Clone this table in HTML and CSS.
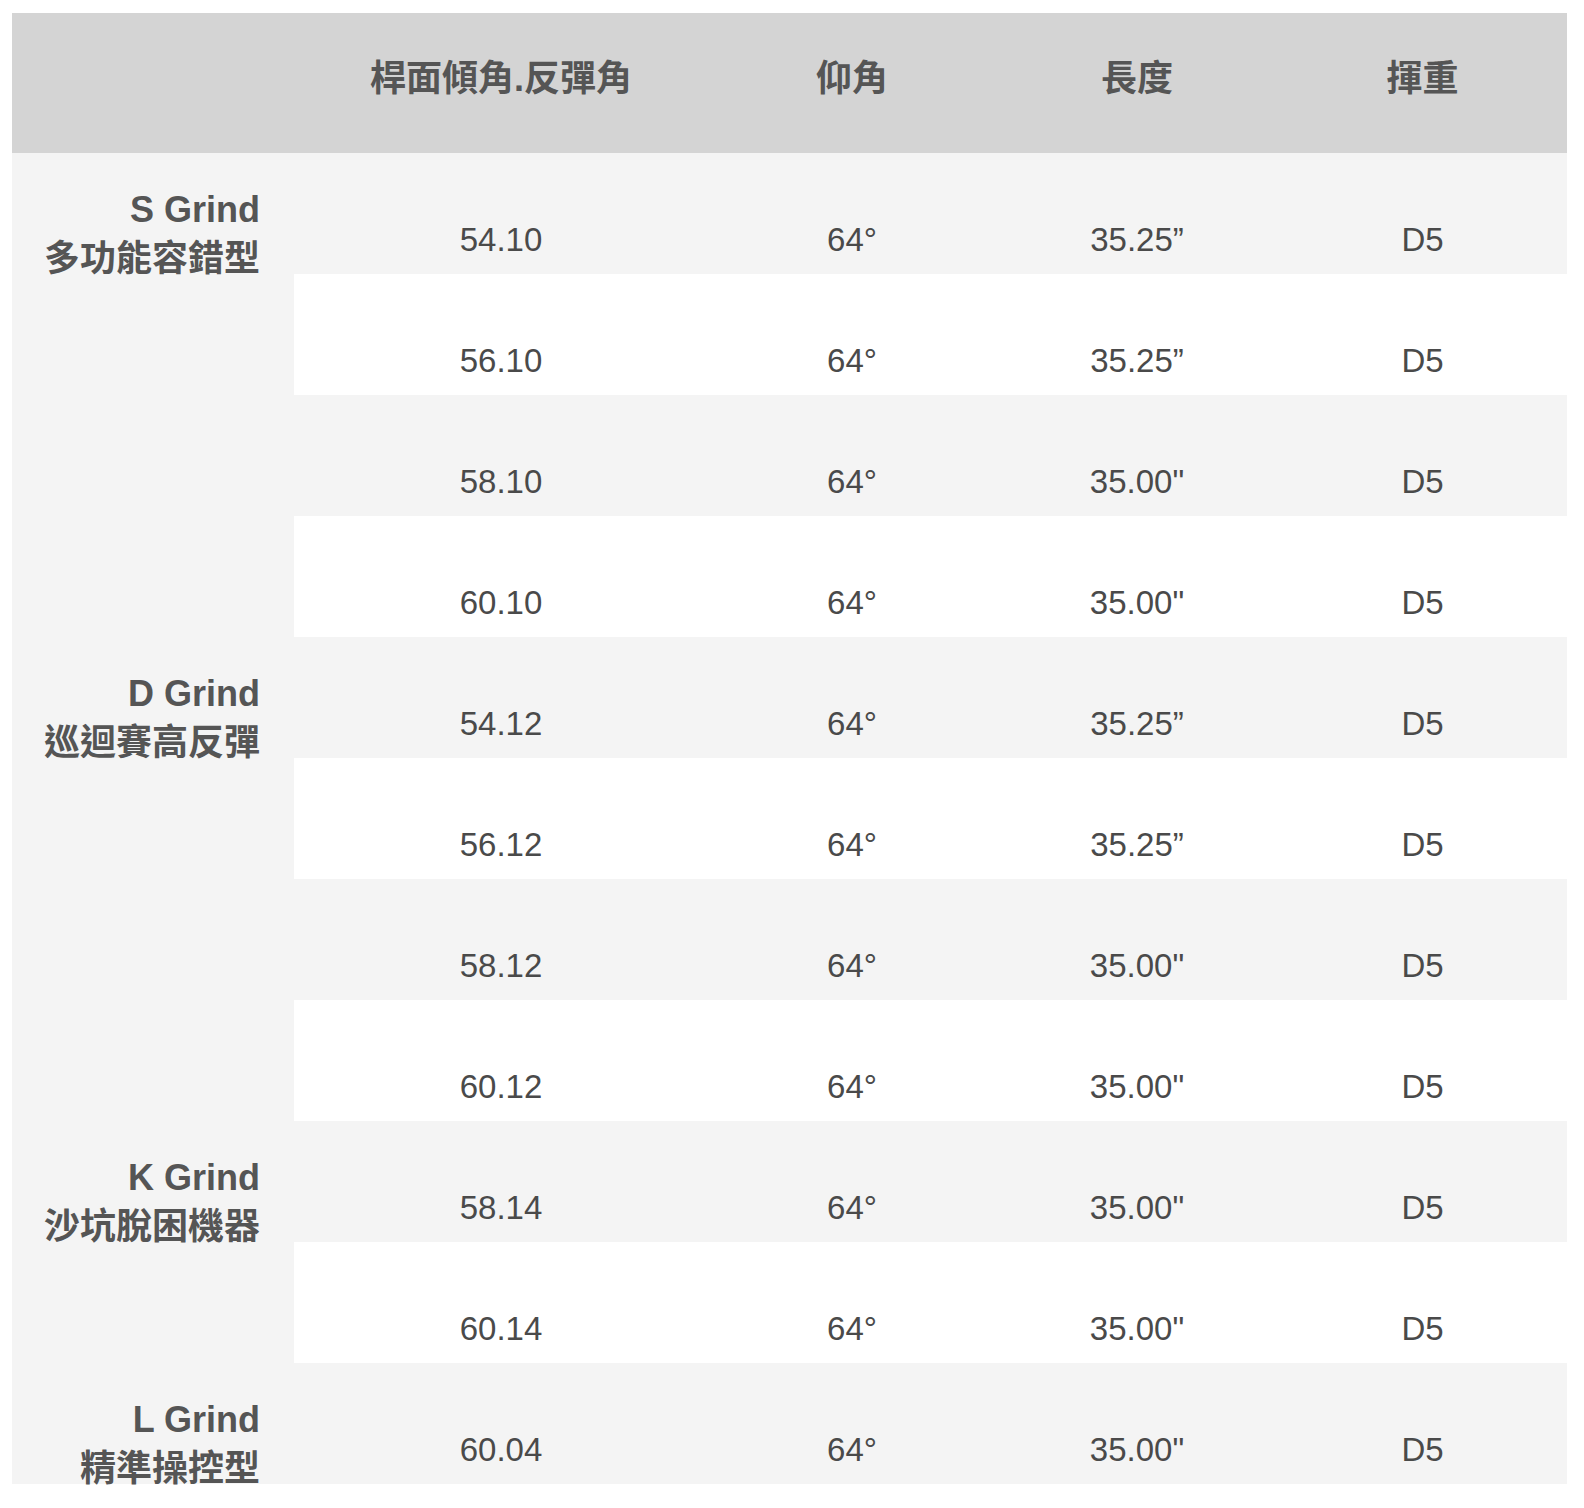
FILE: index.html
```html
<!DOCTYPE html>
<html lang="zh-Hant">
<head>
<meta charset="utf-8">
<title>Specs</title>
<link rel="stylesheet" href="styles.css">
</head>
<body>
<div class="wrap">
<table class="spec">
  <colgroup>
    <col class="c-label">
    <col class="c-loft">
    <col class="c-lie">
    <col class="c-len">
    <col class="c-sw">
  </colgroup>
  <thead>
    <tr>
      <th></th>
      <th>桿面傾角.反彈角</th>
      <th>仰角</th>
      <th>長度</th>
      <th>揮重</th>
    </tr>
  </thead>
  <tbody>
    <tr class="alt">
      <td class="label" rowspan="4"><div class="lbl">S Grind<br>多功能容錯型</div></td>
      <td>54.10</td><td>64°</td><td>35.25”</td><td>D5</td>
    </tr>
    <tr><td>56.10</td><td>64°</td><td>35.25”</td><td>D5</td></tr>
    <tr class="alt"><td>58.10</td><td>64°</td><td>35.00"</td><td>D5</td></tr>
    <tr><td>60.10</td><td>64°</td><td>35.00"</td><td>D5</td></tr>
    <tr class="alt">
      <td class="label" rowspan="4"><div class="lbl">D Grind<br>巡迴賽高反彈</div></td>
      <td>54.12</td><td>64°</td><td>35.25”</td><td>D5</td>
    </tr>
    <tr><td>56.12</td><td>64°</td><td>35.25”</td><td>D5</td></tr>
    <tr class="alt"><td>58.12</td><td>64°</td><td>35.00"</td><td>D5</td></tr>
    <tr><td>60.12</td><td>64°</td><td>35.00"</td><td>D5</td></tr>
    <tr class="alt">
      <td class="label" rowspan="2"><div class="lbl">K Grind<br>沙坑脫困機器</div></td>
      <td>58.14</td><td>64°</td><td>35.00"</td><td>D5</td>
    </tr>
    <tr><td>60.14</td><td>64°</td><td>35.00"</td><td>D5</td></tr>
    <tr class="alt">
      <td class="label" rowspan="1"><div class="lbl">L Grind<br>精準操控型</div></td>
      <td>60.04</td><td>64°</td><td>35.00"</td><td>D5</td>
    </tr>
  </tbody>
</table>
</div>
</body>
</html>
```
FILE: styles.css
```css
html, body {
  margin: 0;
  padding: 0;
  background: #ffffff;
}

.wrap {
  padding: 13px 17px 23px 12px;
}

.spec {
  width: 1555px;
  border-collapse: collapse;
  border-spacing: 0;
  table-layout: fixed;
  font-family: "Liberation Sans", Arial, "Noto Sans CJK TC", sans-serif;
}

.c-label { width: 282px; }
.c-loft { width: 414px; }
.c-lie { width: 288px; }
.c-len { width: 282px; }
.c-sw { width: 289px; }

.spec thead th {
  background: #d4d4d4;
  height: 140px;
  box-sizing: border-box;
  padding: 42px 0 50px;
  vertical-align: top;
  text-align: center;
  font-size: 36px;
  line-height: 48px;
  font-weight: 700;
  color: #555555;
}

.spec tbody td {
  height: 121px;
  box-sizing: border-box;
  padding: 67px 0 14px;
  vertical-align: top;
  text-align: center;
  font-size: 33px;
  line-height: 40px;
  color: #4a4a4a;
  background: #ffffff;
}

.spec tbody tr.alt td {
  background: #f4f4f4;
}

.spec tbody td.label {
  background: #f4f4f4;
  text-align: right;
  padding: 32px 34px 0 0;
  font-size: 36px;
  line-height: 49px;
  font-weight: 700;
  color: #555555;
}

.lbl {
  height: 89px;
  overflow: visible;
  white-space: nowrap;
}
```
